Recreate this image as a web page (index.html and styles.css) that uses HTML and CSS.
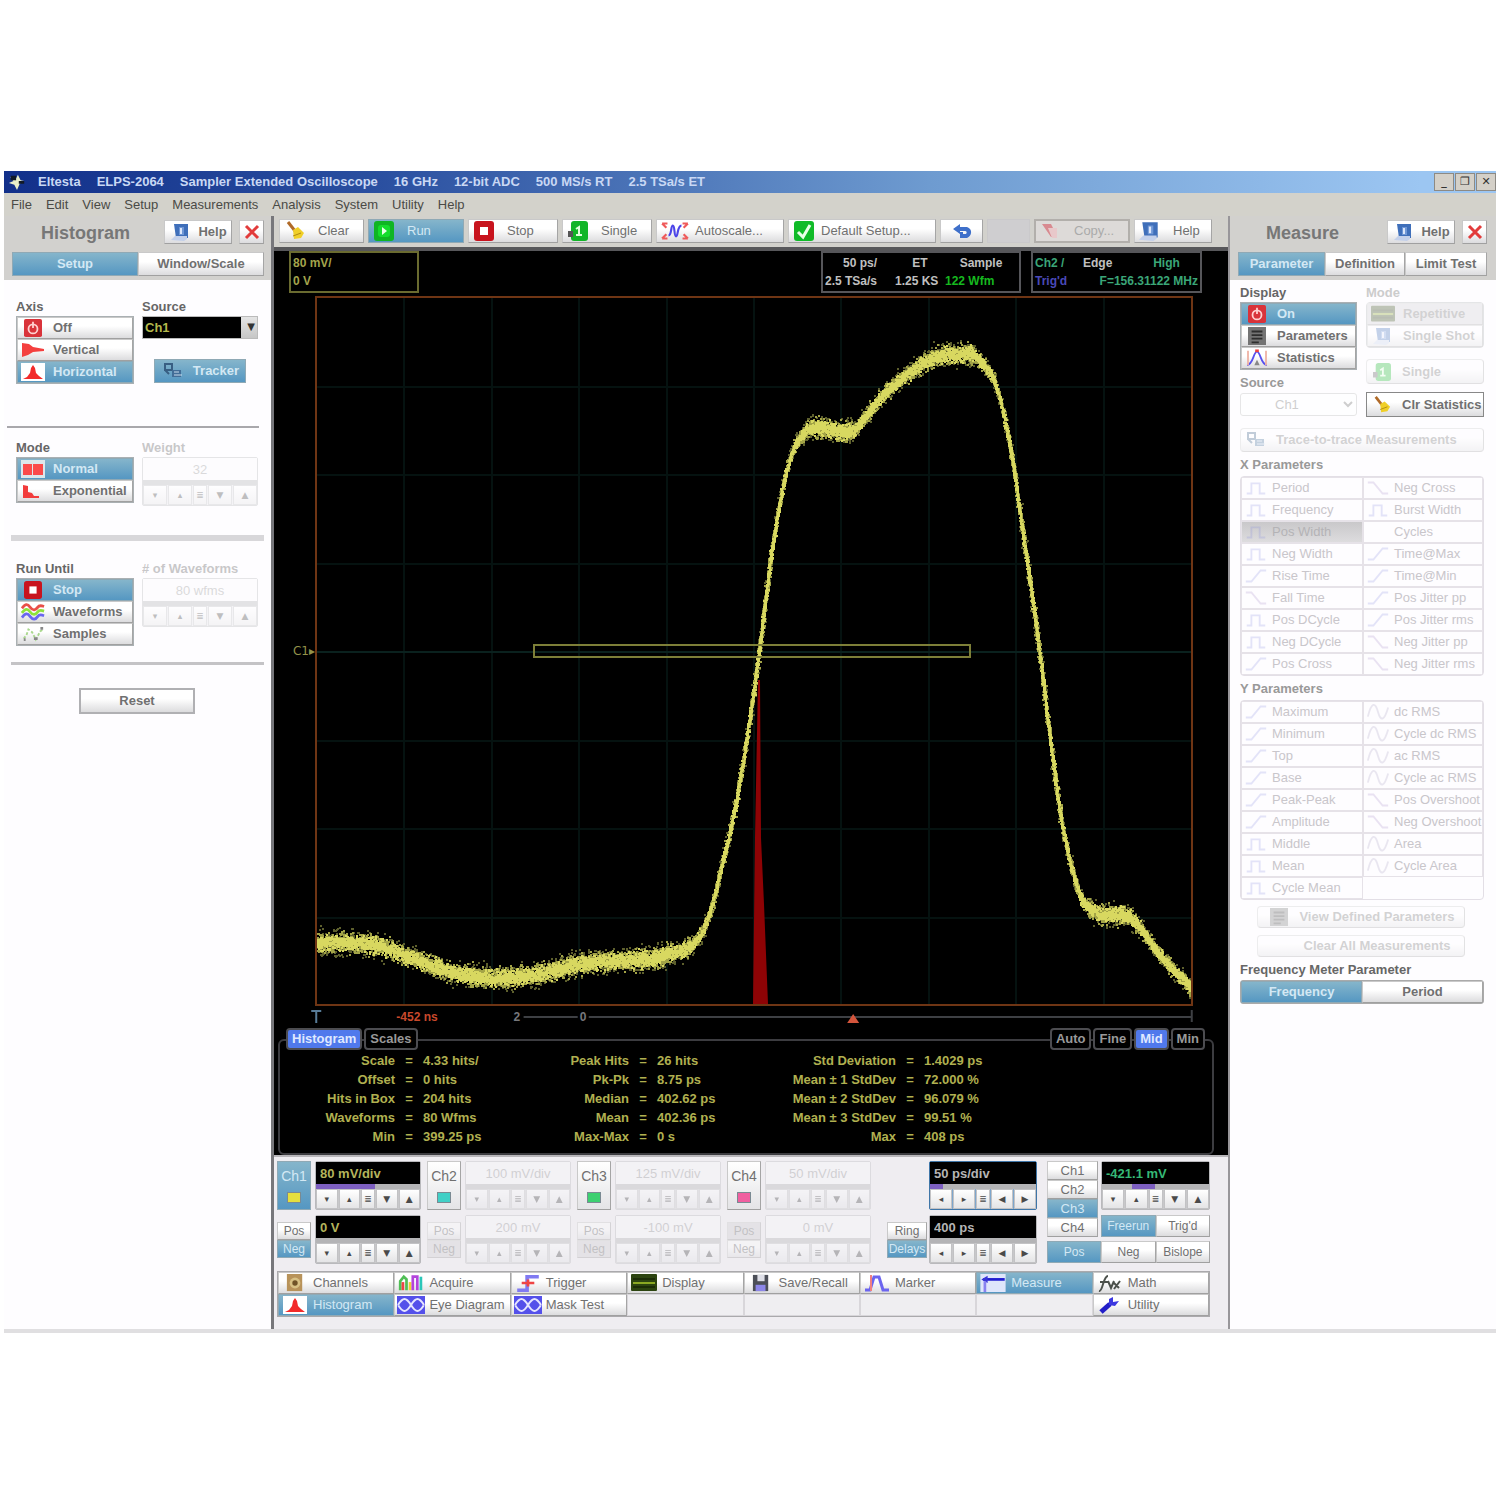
FILE: index.html
```html
<!DOCTYPE html>
<html lang="en">
<head>
<meta charset="utf-8">
<title>Sampler Extended Oscilloscope</title>
<link rel="stylesheet" href="styles.css">
</head>
<body>
<svg class="defs" aria-hidden="true">
  <symbol id="book" viewBox="0 0 20 18"><path d="M3 1h14v14H5z" fill="#3f6fba"/><path d="M0 17l4-4h12v3l-3 2z" fill="#c3d0ea"/><path d="M8 4h5v8H8z" fill="#6f97d6"/><path d="M10 5v6" stroke="#dbe6fa" stroke-width="2"/></symbol>
  <symbol id="cross" viewBox="0 0 18 18"><path d="M3 3l12 12M15 3L3 15" stroke="#e23b3b" stroke-width="3"/></symbol>
  <symbol id="broom" viewBox="0 0 20 20"><path d="M3 1l7 9" stroke="#b06a28" stroke-width="3"/><path d="M8 9l5-3 6 6-3 5-7 1z" fill="#f0cf28"/><path d="M8 15l8-3" stroke="#b08a10"/></symbol>
  <symbol id="run" viewBox="0 0 20 20"><rect width="20" height="20" rx="3" fill="#0fb523"/><rect x="4" y="4" width="12" height="12" rx="3" fill="#14dd2c"/><path d="M8 6v8l5-4z" fill="#e8ffe8"/></symbol>
  <symbol id="stop" viewBox="0 0 20 20"><rect width="20" height="20" rx="3" fill="#c8141e"/><rect x="6" y="6" width="8" height="8" fill="#fff"/></symbol>
  <symbol id="single" viewBox="0 0 20 20"><rect x="3" width="17" height="20" rx="3" fill="#12b528"/><path d="M0 10h5v6H0z" fill="#555"/><path d="M8 8l3-2v8M8 14h6" stroke="#dfffdc" stroke-width="2" fill="none"/></symbol>
  <symbol id="auto" viewBox="0 0 26 18"><path d="M1 2h5M1 16h5M1 2l4 4M1 16l4-4M25 2h-5M25 16h-5M25 2l-4 4M25 16l-4-4" stroke="#ef5a5a" stroke-width="2"/><path d="M7 13c3 0 2-9 4-9s1 10 3 10 1-10 5-10" fill="none" stroke="#4c45e8" stroke-width="2"/></symbol>
  <symbol id="check" viewBox="0 0 20 20"><rect width="20" height="20" rx="3" fill="#10bb28"/><path d="M4 11l5 5 7-12" fill="none" stroke="#e8ffe8" stroke-width="3"/></symbol>
  <symbol id="undo" viewBox="0 0 22 16"><path d="M2 6l7-5v3h7c6 2 5 9 0 11h-4v-4h3c1-1 1-3-1-3H9v3z" fill="#3f70ca"/><path d="M9 9h3v6H9z" fill="#3f70ca"/></symbol>
  <symbol id="copy" viewBox="0 0 22 18"><path d="M2 2h9l2 4h3v9h-5z" fill="#d88a90"/><path d="M8 6h9v10h-5z" fill="#e8c8ca"/></symbol>
  <symbol id="off" viewBox="0 0 20 20"><rect width="20" height="20" rx="2" fill="#d9333a"/><circle cx="10" cy="11" r="5" fill="none" stroke="#ffd0d0" stroke-width="2"/><path d="M10 3v7" stroke="#ffd0d0" stroke-width="2"/></symbol>
  <symbol id="vhist" viewBox="0 0 24 18"><path d="M1 2l7 1 4 3 11 2v2l-11 1-5 3-6 2z" fill="#f4403f"/></symbol>
  <symbol id="hhist" viewBox="0 0 24 18"><rect width="24" height="18" fill="#fff"/><path d="M2 16l4-2 3-4 1-5 2-3 2 3 1 5 3 3 4 3z" fill="#f22a2a"/></symbol>
  <symbol id="tracker" viewBox="0 0 22 18"><path d="M3 2h7v6H3zM3 8l4 4" fill="none" stroke="#385f83" stroke-width="2"/><rect x="10" y="8" width="9" height="7" fill="#426d97"/><path d="M12 10h5M12 13h8" stroke="#c7dced"/></symbol>
  <symbol id="normal" viewBox="0 0 24 18"><rect width="24" height="18" fill="#dde6ea"/><path d="M2 4h9v11H2zM12 4h10v11H12z" fill="#fb4a4a"/></symbol>
  <symbol id="expo" viewBox="0 0 24 18"><path d="M2 16V3l5 1v6l4 1 2 3h5v2z" fill="#f23c3c"/></symbol>
  <symbol id="waves" viewBox="0 0 26 18"><path d="M1 5c4-5 6-5 9-1s6 3 8 0 4-2 7-1" stroke="#e85048" fill="none" stroke-width="3"/><path d="M1 10c4-5 6-5 9-1s6 3 8 0 4-2 7-1" stroke="#8fe23a" fill="none" stroke-width="3"/><path d="M1 15c4-5 6-5 9-1s6 3 8 0 4-2 7-1" stroke="#6a66ef" fill="none" stroke-width="3"/></symbol>
  <symbol id="samples" viewBox="0 0 26 18"><path d="M3 14l3-4 2-6 4 3 4 8 5-9 3-2" stroke="#a9d88d" stroke-width="2" fill="none" stroke-dasharray="3 2"/><path d="M3 15h2M14 14h4M21 3h3" stroke="#888" stroke-width="3"/></symbol>
  <symbol id="list" viewBox="0 0 20 20"><rect width="20" height="20" fill="#747474"/><path d="M4 5h12M4 9h12M4 13h12M4 17h8" stroke="#2f2f2f" stroke-width="2"/></symbol>
  <symbol id="stats" viewBox="0 0 26 20"><path d="M2 18C9 17 9 3 13 3s4 14 11 15" fill="none" stroke="#5650ef" stroke-width="2"/><path d="M3 2v16M23 2v16" stroke="#efb2a4" stroke-width="2"/><path d="M10 18l3-6 3 6z" fill="#888"/><path d="M11 2h4" stroke="#f04040" stroke-width="3"/></symbol>
  <symbol id="chan" viewBox="0 0 22 20"><rect x="2" width="17" height="19" fill="#b8935a"/><circle cx="11" cy="10" r="6" fill="#d8c184"/><circle cx="11" cy="10" r="3" fill="#705327"/></symbol>
  <symbol id="acq" viewBox="0 0 28 20"><path d="M2 18V8l4-5 3 3v12" stroke="#4fbf55" stroke-width="3" fill="none"/><path d="M5 18v-9" stroke="#e44" stroke-width="3"/><path d="M13 18V9" stroke="#f0d235" stroke-width="3"/><path d="M16 18V3h5v15" stroke="#b344dc" stroke-width="3" fill="none"/><path d="M25 3v15" stroke="#2ac6b8" stroke-width="3"/></symbol>
  <symbol id="trig" viewBox="0 0 28 20"><path d="M2 18h11V3h13" stroke="#807af2" stroke-width="4" fill="none"/><path d="M7 10h14M14 6v8" stroke="#ef4444" stroke-width="3"/></symbol>
  <symbol id="disp" viewBox="0 0 26 18"><rect width="26" height="17" rx="1" fill="#2c4410"/><path d="M2 5h22M2 13h22" stroke="#1c2d08" stroke-width="2"/><path d="M2 9h22" stroke="#8ba823" stroke-width="2"/></symbol>
  <symbol id="disk" viewBox="0 0 20 20"><path d="M1 1h17v18H1z" fill="#4c4f58"/><path d="M6 1h8v7H6z" fill="#dfe0e8"/><path d="M4 12h11v7H4z" fill="#8c86e8"/></symbol>
  <symbol id="marker" viewBox="0 0 26 18"><path d="M1 16h5l4-13h5l4 13h6" fill="none" stroke="#6c65ef" stroke-width="3"/><path d="M7 1v16" stroke="#f08080" stroke-width="2"/></symbol>
  <symbol id="meas" viewBox="0 0 28 20"><rect width="28" height="20" fill="#dfe6fb"/><path d="M3 6h24" stroke="#201cd0" stroke-width="3"/><path d="M8 2L1 6l7 4z" fill="#3834d8"/><path d="M5 8v12" stroke="#8882f0" stroke-width="3"/></symbol>
  <symbol id="fx" viewBox="0 0 26 18"><path d="M2 17c4 1 4-15 9-15M3 8h8M11 7l3 7 3-7M16 8l6 6M23 7l-6 8" fill="none" stroke="#4b504b" stroke-width="2"/></symbol>
  <symbol id="eye" viewBox="0 0 28 18"><rect width="28" height="18" fill="#5450ea"/><path d="M1 9c5-8 8-8 13 0 5 8 8 8 13 0M1 9c5 8 8 8 13 0 5-8 8-8 13 0" stroke="#e5e5ff" stroke-width="2" fill="none"/></symbol>
  <symbol id="wrench" viewBox="0 0 26 18"><path d="M4 16l9-8" stroke="#221ec8" stroke-width="5"/><path d="M12 9V3l4-2v5l6-1-4 5z" fill="#3c38e0"/></symbol>
  <symbol id="bell" viewBox="0 0 26 18"><path d="M3 15h5V4h9v11h6" fill="none" stroke="#7a80e0" stroke-width="2"/></symbol>
  <symbol id="edge" viewBox="0 0 26 18"><path d="M2 15h6L18 3h6" fill="none" stroke="#7a80e0" stroke-width="2"/></symbol>
  <symbol id="fall" viewBox="0 0 26 18"><path d="M2 3h6l10 12h6" fill="none" stroke="#9a7ac0" stroke-width="2"/></symbol>
  <symbol id="sine" viewBox="0 0 26 18"><path d="M2 14C6-2 10-2 13 9s7 9 11-5" fill="none" stroke="#9a90b8" stroke-width="2"/></symbol>
</svg>

<div class="app">
  <header class="titlebar">
    <svg class="logo" viewBox="0 0 20 20"><path d="M2 4l6 4 3-6 3 6 4 1-5 3-3 7-3-6-6-2 5-2z" fill="#e9efc9"/><path d="M3 3h6v5H3zM12 9h6v3h-6z" fill="#121a26"/></svg>
    <h1><span>Eltesta</span><span>ELPS-2064</span><span>Sampler Extended Oscilloscope</span><span>16 GHz</span><span>12-bit ADC</span><span>500 MS/s RT</span><span>2.5 TSa/s ET</span></h1>
    <div class="winbtns"><button aria-label="Minimize">_</button><button aria-label="Restore">❐</button><button aria-label="Close">✕</button></div>
  </header>
  <nav class="menubar"><a href="#">File</a><a href="#">Edit</a><a href="#">View</a><a href="#">Setup</a><a href="#">Measurements</a><a href="#">Analysis</a><a href="#">System</a><a href="#">Utility</a><a href="#">Help</a></nav>

  <aside class="panel left">
    <div class="phead">
      <div class="ptitle"><h2>Histogram</h2><button class="btn help"><svg><use href="#book"/></svg>Help</button><button class="btn close" aria-label="Close"><svg><use href="#cross"/></svg></button></div>
      <div class="tabs two"><button class="btn on">Setup</button><button class="btn">Window/Scale</button></div>
    </div>
    <section class="pair s1">
      <div><h3>Axis</h3><div class="group">
        <button class="btn"><svg><use href="#off"/></svg>Off</button><button class="btn"><svg><use href="#vhist"/></svg>Vertical</button><button class="btn on"><svg><use href="#hhist"/></svg>Horizontal</button></div></div>
      <div><label for="src">Source</label><select id="src" class="combo dark"><option>Ch1</option></select>
        <button class="btn on tracker"><svg><use href="#tracker"/></svg>Tracker</button></div>
    </section>
    <hr>
    <section class="pair s2">
      <div><h3>Mode</h3><div class="group"><button class="btn on"><svg><use href="#normal"/></svg>Normal</button><button class="btn"><svg><use href="#expo"/></svg>Exponential</button></div></div>
      <div class="dim"><label for="weight">Weight</label><div class="field"><input id="weight" value="32" disabled><div class="bar"></div><div class="stepper"></div></div></div>
    </section>
    <hr class="thick">
    <section class="pair s3">
      <div><h3>Run Until</h3><div class="group"><button class="btn on"><svg><use href="#stop"/></svg>Stop</button><button class="btn"><svg><use href="#waves"/></svg>Waveforms</button><button class="btn"><svg><use href="#samples"/></svg>Samples</button></div></div>
      <div class="dim"><label for="nwf"># of Waveforms</label><div class="field"><input id="nwf" value="80 wfms" disabled><div class="bar"></div><div class="stepper"></div></div></div>
    </section>
    <hr class="last">
    <button class="btn reset">Reset</button>
  </aside>

  <main>
    <div class="toolbar">
      <button class="btn w85"><svg><use href="#broom"/></svg>Clear</button>
      <button class="btn on w96"><svg><use href="#run"/></svg>Run</button>
      <button class="btn w90"><svg><use href="#stop"/></svg>Stop</button>
      <button class="btn w90"><svg><use href="#single"/></svg>Single</button>
      <button class="btn w128"><svg><use href="#auto"/></svg>Autoscale...</button>
      <button class="btn w148"><svg><use href="#check"/></svg>Default Setup...</button>
      <button class="btn w43" aria-label="Undo"><svg><use href="#undo"/></svg></button>
      <button class="btn blank w43" aria-label="Redo" disabled></button>
      <button class="btn copy w96"><svg><use href="#copy"/></svg>Copy...</button>
      <button class="btn w80"><svg><use href="#book"/></svg>Help</button>
    </div>
    <div class="screen">
      <div class="readouts">
        <div class="ro ch"><span>80 mV/</span><span>0 V</span></div>
        <div class="ro time"><span>50 ps/</span><span>ET</span><span>Sample</span><span>2.5 TSa/s</span><span>1.25 KS</span><span class="lime">122 Wfm</span></div>
        <div class="ro trg"><span class="green">Ch2 /</span><span>Edge</span><span class="green">High</span><span class="blue">Trig'd</span><span class="green freq">F=156.31122 MHz</span></div>
      </div>
      <div class="plotrow">
        <span class="chmark">C1▸</span>
        <svg class="plot" id="plot" viewBox="0 0 874 706" role="img" aria-label="Waveform of channel 1"></svg>
      </div>
      <svg class="axis" viewBox="0 0 876 18">
        <path d="M-5 3H5M0 3v12" stroke="#587c98" stroke-width="2"/>
        <path d="M207 9h54M272 9h602M874 2v12" stroke="#3e4044" stroke-width="2" fill="none"/>
        <text x="80" y="13" class="red">-452 ns</text><text x="197" y="13">2</text><text x="263" y="13">0</text>
        <path d="M530 15l6-9 6 9z" fill="#d4553c"/>
      </svg>
      <div class="restabs"><button class="rt on">Histogram</button><button class="rt">Scales</button><i></i><button class="rt">Auto</button><button class="rt">Fine</button><button class="rt on">Mid</button><button class="rt">Min</button></div>
      <div class="results">
        <table><tr><th>Scale</th><td>=</td><td>4.33 hits/</td></tr><tr><th>Offset</th><td>=</td><td>0 hits</td></tr><tr><th>Hits in Box</th><td>=</td><td>204 hits</td></tr><tr><th>Waveforms</th><td>=</td><td>80 Wfms</td></tr><tr><th>Min</th><td>=</td><td>399.25 ps</td></tr></table>
        <table><tr><th>Peak Hits</th><td>=</td><td>26 hits</td></tr><tr><th>Pk-Pk</th><td>=</td><td>8.75 ps</td></tr><tr><th>Median</th><td>=</td><td>402.62 ps</td></tr><tr><th>Mean</th><td>=</td><td>402.36 ps</td></tr><tr><th>Max-Max</th><td>=</td><td>0 s</td></tr></table>
        <table class="wide"><tr><th>Std Deviation</th><td>=</td><td>1.4029 ps</td></tr><tr><th>Mean ± 1 StdDev</th><td>=</td><td>72.000 %</td></tr><tr><th>Mean ± 2 StdDev</th><td>=</td><td>96.079 %</td></tr><tr><th>Mean ± 3 StdDev</th><td>=</td><td>99.51 %</td></tr><tr><th>Max</th><td>=</td><td>408 ps</td></tr></table>
      </div>
    </div>

    <div class="controls">
      <div class="strip">
        <div class="chan">
          <button class="btn on chb"><span>Ch1</span><i class="yellow"></i></button>
          <div class="field vol"><input aria-label="Ch1 scale" value="80 mV/div"><div class="bar"><b style="width:57%"></b></div><div class="stepper"></div></div>
          <div class="pn"><button class="btn">Pos</button><button class="btn on">Neg</button></div>
          <div class="field"><input aria-label="Ch1 offset" value="0 V"><div class="bar"></div><div class="stepper"></div></div>
        </div>
        <div class="chan">
          <button class="btn chb"><span>Ch2</span><i class="cyan"></i></button>
          <div class="field off"><input aria-label="Ch2 scale" value="100 mV/div" disabled><div class="bar"></div><div class="stepper"></div></div>
          <div class="pn off"><button class="btn">Pos</button><button class="btn gray">Neg</button></div>
          <div class="field off"><input aria-label="Ch2 offset" value="200 mV" disabled><div class="bar"></div><div class="stepper"></div></div>
        </div>
        <div class="chan">
          <button class="btn chb"><span>Ch3</span><i class="lgreen"></i></button>
          <div class="field off"><input aria-label="Ch3 scale" value="125 mV/div" disabled><div class="bar"></div><div class="stepper"></div></div>
          <div class="pn off"><button class="btn">Pos</button><button class="btn gray">Neg</button></div>
          <div class="field off"><input aria-label="Ch3 offset" value="-100 mV" disabled><div class="bar"></div><div class="stepper"></div></div>
        </div>
        <div class="chan">
          <button class="btn chb"><span>Ch4</span><i class="pink"></i></button>
          <div class="field off"><input aria-label="Ch4 scale" value="50 mV/div" disabled><div class="bar"></div><div class="stepper"></div></div>
          <div class="pn off"><button class="btn gray">Pos</button><button class="btn">Neg</button></div>
          <div class="field off"><input aria-label="Ch4 offset" value="0 mV" disabled><div class="bar"></div><div class="stepper"></div></div>
        </div>
        <div class="chan timebase">
          <span></span>
          <div class="field sel"><input aria-label="Time scale" value="50 ps/div"><div class="bar"><b style="width:12%"></b></div><div class="stepper sideways"></div></div>
          <div class="pn"><button class="btn">Ring</button><button class="btn on">Delays</button></div>
          <div class="field"><input aria-label="Delay" value="400 ps"><div class="bar"></div><div class="stepper sideways"></div></div>
        </div>
        <div class="trigger">
          <div class="chlist"><button class="btn">Ch1</button><button class="btn">Ch2</button><button class="btn on">Ch3</button><button class="btn">Ch4</button></div>
          <div class="lv">
            <div class="field lev"><input aria-label="Trigger level" value="-421.1 mV"><div class="bar"><b style="width:22%;margin-left:28%"></b></div><div class="stepper"></div></div>
            <div class="tabs fr"><button class="btn on">Freerun</button><button class="btn">Trig'd</button></div>
          </div>
          <div class="tabs slope"><button class="btn on">Pos</button><button class="btn">Neg</button><button class="btn">Bislope</button></div>
        </div>
      </div>
      <div class="dock">
        <button class="btn"><svg><use href="#chan"/></svg>Channels</button><button class="btn"><svg><use href="#acq"/></svg>Acquire</button><button class="btn"><svg><use href="#trig"/></svg>Trigger</button><button class="btn"><svg><use href="#disp"/></svg>Display</button><button class="btn"><svg><use href="#disk"/></svg>Save/Recall</button><button class="btn"><svg><use href="#marker"/></svg>Marker</button><button class="btn on"><svg><use href="#meas"/></svg>Measure</button><button class="btn"><svg><use href="#fx"/></svg>Math</button>
        <button class="btn on"><svg><use href="#hhist"/></svg>Histogram</button><button class="btn"><svg><use href="#eye"/></svg>Eye Diagram</button><button class="btn"><svg><use href="#eye"/></svg>Mask Test</button><span></span><span></span><span></span><span></span><button class="btn"><svg><use href="#wrench"/></svg>Utility</button>
      </div>
    </div>
  </main>

  <aside class="panel right">
    <div class="phead">
      <div class="ptitle"><h2>Measure</h2><button class="btn help"><svg><use href="#book"/></svg>Help</button><button class="btn close" aria-label="Close"><svg><use href="#cross"/></svg></button></div>
      <div class="tabs three"><button class="btn on">Parameter</button><button class="btn">Definition</button><button class="btn">Limit Test</button></div>
    </div>
    <div class="rbody">
      <div class="pair">
        <div><h3>Display</h3><div class="group"><button class="btn on"><svg><use href="#off"/></svg>On</button><button class="btn"><svg><use href="#list"/></svg>Parameters</button><button class="btn"><svg><use href="#stats"/></svg>Statistics</button></div>
          <label class="mid" for="msrc">Source</label><select id="msrc" class="combo" disabled><option>Ch1</option></select></div>
        <div><h3 class="pale">Mode</h3><div class="group faint"><button class="btn gray" disabled><svg><use href="#disp"/></svg>Repetitive</button><button class="btn" disabled><svg><use href="#book"/></svg>Single Shot</button></div>
          <button class="btn faint one" disabled><svg><use href="#single"/></svg>Single</button>
          <button class="btn clr"><svg><use href="#broom"/></svg>Clr Statistics</button></div>
      </div>
      <button class="btn faint trace" disabled><svg><use href="#tracker"/></svg>Trace-to-trace Measurements</button>
      <h3 class="half">X Parameters</h3>
      <div class="params" id="xparams"></div>
      <h3 class="half">Y Parameters</h3>
      <div class="params" id="yparams"></div>
      <button class="btn faint act" disabled><svg><use href="#list"/></svg>View Defined Parameters</button>
      <button class="btn faint act" disabled><svg></svg>Clear All Measurements</button>
      <h3>Frequency Meter Parameter</h3>
      <div class="tabs two fm"><button class="btn on">Frequency</button><button class="btn">Period</button></div>
    </div>
  </aside>
</div>
<script src="scope.js"></script>
</body>
</html>
```
FILE: styles.css
```css
* { box-sizing: border-box; }
body { margin: 0; padding: 171px 4px 0; background: #fff; font: 13px/16px "Liberation Sans", Arial, sans-serif; color: #555; }
.defs { position: absolute; width: 0; height: 0; }
h1, h2, h3 { margin: 0; }
button, input, select { font: inherit; color: inherit; margin: 0; }
.app { display: grid; grid-template-columns: 267px minmax(0, 1fr) 268px; background: #fefdff; border-bottom: 4px solid #e0dfe1; }
.titlebar, .menubar { grid-column: 1 / -1; display: flex; align-items: center; }
.titlebar { height: 22px; background: linear-gradient(90deg, #12308a, #2a4fa0 25%, #6e9bd0 62%, #9cc6f2 95%); color: #c9d8f4; padding-left: 4px; }
.logo { width: 18px; height: 18px; }
h1 { display: flex; gap: 16px; flex: 1; font: bold 13px/20px "Liberation Sans", sans-serif; padding-left: 12px; white-space: nowrap; }
.winbtns { display: flex; gap: 1px; }
.winbtns button { width: 20px; height: 18px; padding: 0; border: 1px solid #8d8a84; background: #d4d0c8; color: #333; font: bold 11px/14px "DejaVu Sans", sans-serif; }
.menubar { height: 23px; background: #d3d2cb; gap: 14px; padding-left: 7px; }
.menubar a { color: #4a4a46; text-decoration: none; }

.btn { display: flex; align-items: center; justify-content: center; height: 22px; padding: 0 3px; border: 1px solid #b4b4b4; border-color: #c9c9c9 #a5a5a5 #a0a0a0 #c9c9c9; background: linear-gradient(#fff 40%, #dcdcde); color: #707070; font-weight: bold; white-space: nowrap; overflow: hidden; }
.btn svg { width: 24px; height: 18px; flex: none; margin-right: 8px; }
.btn.on { background: linear-gradient(#85b5cb, #5597c2); color: #d3e8f4; border-color: #8fa9b5; }
.btn.gray { background: #d0cfd2; }

.phead { height: 64px; background: #d2d1ce; padding: 4px 7px 0 8px; }
.ptitle { display: flex; gap: 7px; height: 32px; align-items: flex-start; }
.ptitle h2 { flex: 1; padding-left: 29px; font: bold 18px/26px "Liberation Sans", sans-serif; color: #777; }
.ptitle .btn { height: 24px; }
.help { width: 68px; }
.help svg { margin-right: 5px; }
.close { width: 25px; }
.close svg { margin: 0; width: 18px; }
.tabs { display: grid; height: 24px; background: #b8bbbd; }
.tabs .btn { height: auto; }
.two { grid-template-columns: 1fr 1fr; }
.three { grid-template-columns: 87px 80px 1fr; }
.right .phead { padding-right: 9px; }
.right .ptitle h2 { padding-left: 28px; }

.pair { display: grid; grid-template-columns: 118px 116px; gap: 8px; padding-left: 12px; }
h3, .pair label { display: block; font: bold 13px/18px "Liberation Sans", sans-serif; color: #666; white-space: nowrap; }
.group { display: grid; border: 1px solid #aab0b3; background: #bbb; }
.group .btn, .params .btn { justify-content: flex-start; }
.s1 { padding-top: 18px; padding-bottom: 42px; }
.s2 { padding-top: 11px; padding-bottom: 29px; }
.s3 { padding-top: 19px; padding-bottom: 16px; }
hr { border: 0; margin: 0 12px 0 3px; height: 2px; background: #a9a8ac; }
hr.thick { margin: 0 7px; height: 6px; background: #d8d7da; }
hr.last { margin: 0 7px; height: 3px; background: #c4c3c6; }
.reset { width: 116px; height: 26px; margin: 23px 0 0 75px; border: 2px solid #b0b0b3; }
.combo { width: 100%; height: 23px; padding: 0 2px; border: 1px solid #bbb; border-radius: 0; background: #fff; }
.combo.dark { color: #b4b84c; font-weight: bold; appearance: none; background: linear-gradient(#e5e5e5, #c6c6c6) right / 16px 100% no-repeat #000; }
.pair > div { position: relative; min-width: 0; }
.s1 > div:last-child::after { content: "▼"; position: absolute; right: 3px; top: 21px; font: 10px/16px "DejaVu Sans", sans-serif; color: #333; pointer-events: none; }
.tracker { width: 92px; height: 24px; margin: 20px 0 0 12px; }
.dim { opacity: .35; }
.dim .field { background: #e4e2e8; }

.field { border: 1px solid #b9b9bc; background: #c8c8ca; border-radius: 2px; min-width: 0; }
.field input { display: block; width: 100%; height: 22px; border: 0; padding: 0 4px; background: #000; color: #b4b45c; font-weight: bold; }
.field .bar { height: 5px; display: flex; background: #b4b4b6; }
.field .bar b { background: #7d5fc0; }
.stepper { display: grid; grid-template-columns: repeat(2, minmax(0, 1fr)) 14px repeat(2, minmax(0, 1fr)); gap: 1px; height: 20px; }
.stepper button { border: 1px solid #c2c2c4; background: linear-gradient(#fff, #e4e4e6); color: #4a4a4a; padding: 0; font: 9px/16px "DejaVu Sans", sans-serif; }
.dim .field input, .off input { background: #fcfbfd; color: #999; text-align: center; font-weight: normal; }
.off { opacity: .35; }

main { min-width: 0; border: solid #77777b; border-width: 0 0 0 3px; background: #efedf1; }
.toolbar { display: flex; justify-content: space-between; height: 31px; padding: 3px 16px 0 5px; background: #d2d1cc; }
.toolbar .btn { height: 24px; justify-content: flex-start; padding: 0 4px; font-weight: normal; }
.toolbar .btn svg { width: 22px; height: 20px; margin-right: 12px; }
.w85 { width: 85px; } .w96 { width: 96px; } .w90 { width: 90px; } .w128 { width: 128px; } .w148 { width: 148px; } .w43 { width: 43px; } .w80 { width: 78px; }
.toolbar .w43 { justify-content: center; }
.toolbar .w43 svg { margin: 0; }
.toolbar .blank { background: #cfced0; border-color: #cac9cb; }
.toolbar .w128 svg { margin-right: 6px; width: 28px; }
.toolbar .w148 svg { margin-right: 6px; }
.toolbar .copy { border: 2px solid #b2afab; background: #dddad8; color: #aaa; }
.screen { background: #000; border-top: 4px solid #57575a; color: #b0b050; }
.readouts { display: flex; gap: 10px; padding: 0 26px 3px 15px; height: 45px; font-weight: bold; line-height: 18px; color: #c0c0c0; white-space: nowrap; }
.ro { border: 2px solid #56565a; display: grid; align-content: center; padding: 0 2px; font-size: 12px; }
.ch { width: 130px; border-color: #6a6b30; color: #a4a44c; margin-right: auto; }
.time { width: 200px; grid-template-columns: 70px 50px 1fr; }
.ro.time span:nth-child(-n+3) { text-align: center; }
.trg { width: 171px; grid-template-columns: 48px 52px 1fr; }
.freq { grid-column: 2 / -1; text-align: right; }
.lime { color: #16b81f; } .green { color: #3ba678; } .blue { color: #4a49b8; }
.trg span:nth-child(3) { text-align: center; }
.plotrow { display: grid; grid-template-columns: 41px minmax(0, 1fr); padding-right: 35px; align-items: center; }
.chmark { text-align: right; font: 12px/14px "DejaVu Sans", sans-serif; color: #92924a; }
.plot { display: block; width: 100%; border: 2px solid #6f3514; }
.axis { display: block; width: calc(100% - 76px); margin: 2px 35px 0 42px; overflow: visible; font: bold 12px "Liberation Sans", sans-serif; fill: #77787c; }
.axis .red { fill: #c8492c; }
.restabs { display: flex; gap: 2px; padding: 2px 23px 0 12px; margin-bottom: -11px; position: relative; }
.restabs i { flex: 1; }
.rt { height: 22px; padding: 0 4px; border: 2px solid #4c4c50; border-radius: 4px; background: #000; color: #999; font-weight: bold; }
.rt.on { background: #5079ec; color: #dfe8ff; }
.results { display: flex; margin: 0 14px 0 4px; border: 2px solid #3c3c40; border-radius: 6px; padding: 10px 0 7px; }
.results table { width: 234px; border-spacing: 0; table-layout: fixed; }
.results th { width: 115px; text-align: right; padding: 0; line-height: 19px; height: 19px; white-space: nowrap; }
.results .wide { width: 320px; }
.results .wide th { width: 148px; }
.results td { padding: 0; font-weight: bold; white-space: nowrap; }
.results td:nth-child(2) { width: 28px; text-align: center; }

.controls { padding: 4px 18px 12px 3px; border-top: 2px solid #b8b6ba; }
.strip { display: flex; gap: 6px; }
.chan { display: grid; grid-template-columns: 34px 106px; column-gap: 4px; row-gap: 5px; align-content: start; }
.chb { flex-direction: column; gap: 8px; height: 49px; background: linear-gradient(#fff, #e4e4e6); }
.chb span { font-weight: normal; font-size: 14px; }
.chb i { width: 14px; height: 11px; border: 1px solid #7a8a92; }
.yellow { background: #e5df3e; } .cyan { background: #40d0c6; } .lgreen { background: #3cd070; } .pink { background: #f060a0; }
.pn { padding-top: 7px; display: grid; align-content: start; }
.pn .btn { height: 18px; padding: 0; font-size: 12px; font-weight: normal; }
.timebase { grid-template-columns: 40px 108px; column-gap: 2px; margin-left: auto; }
.field.sel { background: #7da6cc; border-color: #3f76a8; }
.timebase input { color: #b5b5b5; }
.trigger { display: grid; grid-template-columns: 51px 109px; column-gap: 3px; row-gap: 4px; align-content: start; margin-left: 4px; }
.chlist { display: grid; }
.chlist .btn { height: 19px; font-weight: normal; }
.lev input { color: #35b876; }
.fr { grid-template-columns: 1fr 1fr; margin-top: 5px; height: 22px; }
.slope { grid-column: 1 / -1; grid-template-columns: 1fr 1fr 1fr; height: 22px; }
.fr .btn, .slope .btn { font-size: 12px; font-weight: normal; padding: 0; }
.dock { display: grid; grid-template-columns: repeat(8, minmax(0, 1fr)); margin-top: 7px; border: 1px solid #aaa9ac; }
.dock .btn { justify-content: flex-start; font-weight: normal; padding: 0 2px; }
.dock .btn svg { width: 28px; margin-right: 4px; }
.dock span { border: 1px solid #d8d6da; background: #efeef1; }

.right { border-left: 2px solid #98969a; }
.rbody { padding: 4px 12px 0 10px; display: grid; }
.rbody .pair { grid-template-columns: 117px 118px; gap: 9px; padding: 0; }
.rbody .combo { padding-left: 30px; border-color: #ddd; border-radius: 3px; color: #bbb; }
.rbody .mid { margin: 4px 0 1px; color: #999; }
.rbody .pale { color: #ccc; }
.rbody .half { color: #999; margin-bottom: 2px; }
.faint { opacity: .3; border-radius: 4px; }
.one { width: 100%; height: 25px; margin-top: 11px; justify-content: flex-start; }
.clr { width: 100%; height: 25px; margin-top: 8px; border-color: #888; justify-content: flex-start; }
.trace { height: 24px; margin: 11px 0 4px; justify-content: flex-start; }
.params { display: grid; grid-template-columns: 122px minmax(0, 1fr); grid-template-rows: repeat(9, 22px); grid-auto-flow: column; border: 1px solid #e3dfe6; border-radius: 4px; margin-bottom: 4px; }
.params .btn { background: none; border-color: #e6e2e8; color: #c9c6cb; font-weight: normal; padding: 0 0 0 2px; }
.params .btn svg { opacity: .2; margin-right: 4px; }
.params .btn.sel { background: linear-gradient(#c9c8ca, #dddcde); color: #b4b3b6; }
.act { margin: 2px 19px 5px 17px; }
.act + .act { margin-bottom: 4px; }
.fm { margin-top: 1px; border: 1px solid #aaa; border-radius: 3px; }
```
FILE: scope.js
```js
// Stepper buttons under every numeric field
document.querySelectorAll('.stepper').forEach(function (el) {
  var glyphs = el.classList.contains('sideways') ? ['◂', '▸', '≣', '◀', '▶'] : ['▾', '▴', '≣', '▼', '▲'];
  var names = ['Fine down', 'Fine up', 'Keypad', 'Down', 'Up'];
  glyphs.forEach(function (g, i) {
    var b = document.createElement('button');
    b.textContent = g;
    b.setAttribute('aria-label', names[i]);
    el.appendChild(b);
  });
});

// Measurement parameter lists: [label, icon]
var lists = {
  xparams: [['Period', 'bell'], ['Frequency', 'bell'], ['Pos Width', 'bell'], ['Neg Width', 'bell'], ['Rise Time', 'edge'], ['Fall Time', 'fall'], ['Pos DCycle', 'bell'], ['Neg DCycle', 'bell'], ['Pos Cross', 'edge'],
    ['Neg Cross', 'fall'], ['Burst Width', 'bell'], ['Cycles', ''], ['Time@Max', 'edge'], ['Time@Min', 'edge'], ['Pos Jitter pp', 'edge'], ['Pos Jitter rms', 'edge'], ['Neg Jitter pp', 'fall'], ['Neg Jitter rms', 'fall']],
  yparams: [['Maximum', 'edge'], ['Minimum', 'edge'], ['Top', 'edge'], ['Base', 'edge'], ['Peak-Peak', 'edge'], ['Amplitude', 'edge'], ['Middle', 'bell'], ['Mean', 'bell'], ['Cycle Mean', 'bell'],
    ['dc RMS', 'sine'], ['Cycle dc RMS', 'sine'], ['ac RMS', 'sine'], ['Cycle ac RMS', 'sine'], ['Pos Overshoot', 'fall'], ['Neg Overshoot', 'fall'], ['Area', 'sine'], ['Cycle Area', 'sine']]
};
Object.keys(lists).forEach(function (id) {
  document.getElementById(id).innerHTML = lists[id].map(function (p) {
    var sel = p[0] === 'Pos Width' ? ' sel' : '';
    return '<button class="btn' + sel + '" disabled><svg><use href="#' + p[1] + '"/></svg>' + p[0] + '</button>';
  }).join('');
});

// Waveform knots in plot units
var pts = [[0,646],[30,645],[60,648],[90,658],[115,668],[145,677],[175,680],[205,679],[235,673],[265,666],[300,663],[330,661],[350,657],[373,648],[390,622],[405,565],[417,512],[429,441],[438,380],[446,318],[455,248],[467,182],[476,151],[484,138],[492,131],[507,130],[523,134],[537,131],[550,116],[567,96],[596,72],[619,59],[643,56],[655,57],[663,64],[678,87],[693,151],[704,226],[719,331],[731,428],[745,529],[760,591],[772,611],[788,617],[807,617],[820,627],[831,642],[850,666],[874,690]];
var seed = 7;
function rnd() { seed = (seed * 16807) % 2147483647; return seed / 2147483647; }
function gauss() { return rnd() + rnd() + rnd() + rnd() - 2; }
var curve = [];
for (var i = 0; i < pts.length - 1; i++) {
  var a = pts[Math.max(i - 1, 0)], b = pts[i], c = pts[i + 1], d = pts[Math.min(i + 2, pts.length - 1)];
  var n = Math.ceil(Math.hypot(c[0] - b[0], c[1] - b[1]));
  for (var k = 0; k < n; k++) {
    var t = k / n, p = [0, 1].map(function (q) {
      return 0.5 * (2 * b[q] + (c[q] - a[q]) * t + (2 * a[q] - 5 * b[q] + 4 * c[q] - d[q]) * t * t + (3 * b[q] - a[q] - 3 * c[q] + d[q]) * t * t * t);
    });
    curve.push([p[0], p[1], Math.abs(c[0] - b[0]) / Math.hypot(c[0] - b[0], c[1] - b[1])]);
  }
}
function cloud(spread, per) {
  var s = '';
  curve.forEach(function (p) {
    for (var j = 0; j < Math.ceil(per * (0.05 + p[2])); j++) {
      var x = p[0] + gauss() * 2 * spread, y = p[1] + gauss() * (1 + 9 * p[2]) * spread;
      s += 'M' + Math.round(Math.max(0, Math.min(872, x))) + ' ' + Math.round(y) + 'h2';
    }
  });
  return s;
}
var grid = '';
for (i = 1; i < 10; i++) grid += 'M' + Math.round(i * 87.4) + ' 0V706';
for (i = 1; i < 8; i++) grid += 'M0 ' + Math.round(i * 88.5) + 'H874';
document.getElementById('plot').innerHTML =
  '<path d="' + grid + '" stroke="#051210" stroke-width="2" fill="none"/>' +
  '<path d="M0 354H874" stroke="#0a211e" stroke-width="2"/>' +
  '<path d="' + cloud(1.05, 4) + '" stroke="#5d5f2d" stroke-width="2"/>' +
  '<path d="' + cloud(0.8, 7) + '" stroke="#a3a447" stroke-width="2"/>' +
  '<path d="' + cloud(0.6, 6) + '" stroke="#d8d860" stroke-width="2"/>' +
  '<path d="M441 382h2l1 158 3 66 4 100h-15l2-166z" fill="#8e0305"/>' +
  '<rect x="217" y="347" width="436" height="12" fill="none" stroke="#7d7f38" stroke-width="2"/>';
```
